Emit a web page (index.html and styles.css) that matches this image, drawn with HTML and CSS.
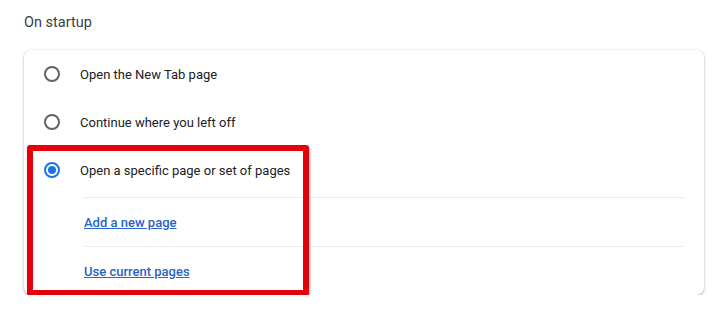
FILE: index.html
```html
<!DOCTYPE html>
<html>
<head>
  <title>On startup</title>
  <link rel="stylesheet" href="styles.css">
</head>
<body>
  <div class="section">
    <h2 class="section-title">On startup</h2>
    <div class="card">
      <div class="option">
        <span class="radio"></span>
        <span class="label">Open the New Tab page</span>
      </div>
      <div class="option">
        <span class="radio"></span>
        <span class="label">Continue where you left off</span>
      </div>
      <div class="option">
        <span class="radio checked"></span>
        <span class="label">Open a specific page or set of pages</span>
      </div>
      <div class="pages">
        <div class="page-row"><a href="#">Add a new page</a></div>
        <div class="page-row"><a href="#">Use current pages</a></div>
      </div>
      <div class="highlight"></div>
    </div>
  </div>
</body>
</html>
```

FILE: styles.css
```css
body {
  margin: 0;
  background: #fff;
  font-family: Roboto, "Liberation Sans", sans-serif;
  font-size: 13px;
  color: #202124;
}

.section {
  padding: 13px 23px 0 24px;
}

.section-title {
  margin: 0 0 17px;
  font-size: 14.5px;
  font-weight: 400;
  line-height: 20px;
  color: #3c4043;
}

.card {
  position: relative;
  width: 680px;
  border-radius: 8px;
  background: #fff;
  box-shadow: 0 1px 2px rgba(60, 64, 67, 0.3), 0 1px 3px 1px rgba(60, 64, 67, 0.12);
}

.option {
  display: flex;
  align-items: center;
  height: 48px;
  padding-left: 20px;
}

.radio {
  box-sizing: border-box;
  width: 16px;
  height: 16px;
  border: 2px solid #5f6368;
  border-radius: 50%;
  margin-right: 20px;
  display: flex;
  align-items: center;
  justify-content: center;
}

.radio.checked {
  border-color: #1a73e8;
}

.radio.checked::after {
  content: "";
  width: 8px;
  height: 8px;
  border-radius: 50%;
  background: #1a73e8;
}

.label {
  color: #202124;
}

.pages {
  margin: 3px 20px 0 60px;
}

.page-row {
  display: flex;
  align-items: center;
  height: 48px;
  border-top: 1px solid #e8eaed;
}

.page-row a {
  color: #2a63c9;
  font-weight: 500;
  text-decoration: underline;
}

.highlight {
  position: absolute;
  left: 3px;
  top: 95px;
  width: 282px;
  height: 151px;
  box-sizing: border-box;
  border: 6px solid #e5000a;
  border-radius: 3px;
  box-shadow: 1px 2px 3px rgba(0, 0, 0, 0.3);
}
```
